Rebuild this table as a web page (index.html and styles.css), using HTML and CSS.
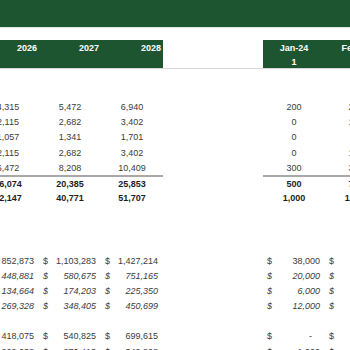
FILE: index.html
```html
<!DOCTYPE html>
<html>
<head>
<meta charset="utf-8">
<link rel="stylesheet" href="styles.css">
</head>
<body>
<div class="band"></div>
<div class="sheet">
  <div class="row hdr">
    <div class="hcell">2026</div>
    <div class="hcell">2027</div>
    <div class="hcell">2028</div>
    <div class="gap"></div>
    <div class="hcell mcell"><span>Jan-24</span><span>1</span></div>
    <div class="hcell mcell"><span>Feb-24</span><span>2</span></div>
  </div>

  <div class="row"></div>
  <div class="row"></div>

  <div class="row"><div class="c">4,315</div><div class="c">5,472</div><div class="c">6,940</div><div class="gap"></div><div class="c">200</div><div class="c">240</div></div>
  <div class="row"><div class="c">2,115</div><div class="c">2,682</div><div class="c">3,402</div><div class="gap"></div><div class="c">0</div><div class="c">100</div></div>
  <div class="row"><div class="c">1,057</div><div class="c">1,341</div><div class="c">1,701</div><div class="gap"></div><div class="c">0</div><div class="c">0</div></div>
  <div class="row"><div class="c">2,115</div><div class="c">2,682</div><div class="c">3,402</div><div class="gap"></div><div class="c">0</div><div class="c">100</div></div>
  <div class="row"><div class="c">6,472</div><div class="c">8,208</div><div class="c">10,409</div><div class="gap"></div><div class="c">300</div><div class="c">300</div></div>
  <div class="row bold"><div class="c tot">16,074</div><div class="c tot">20,385</div><div class="c tot">25,853</div><div class="gap"></div><div class="c tot">500</div><div class="c tot">740</div></div>
  <div class="row bold"><div class="c">32,147</div><div class="c">40,771</div><div class="c">51,707</div><div class="gap"></div><div class="c">1,000</div><div class="c">1,480</div></div>

  <div class="row"></div>
  <div class="row"></div>
  <div class="row tall"></div>

  <div class="row">
    <div class="acct"><span>$</span><span>852,873</span></div>
    <div class="acct"><span>$</span><span>1,103,283</span></div>
    <div class="acct"><span>$</span><span>1,427,214</span></div>
    <div class="gap"></div>
    <div class="acct"><span>$</span><span>38,000</span></div>
    <div class="acct"><span>$</span><span>45,600</span></div>
  </div>
  <div class="row it">
    <div class="acct"><span>$</span><span>448,881</span></div>
    <div class="acct"><span>$</span><span>580,675</span></div>
    <div class="acct"><span>$</span><span>751,165</span></div>
    <div class="gap"></div>
    <div class="acct"><span>$</span><span>20,000</span></div>
    <div class="acct"><span>$</span><span>24,000</span></div>
  </div>
  <div class="row it">
    <div class="acct"><span>$</span><span>134,664</span></div>
    <div class="acct"><span>$</span><span>174,203</span></div>
    <div class="acct"><span>$</span><span>225,350</span></div>
    <div class="gap"></div>
    <div class="acct"><span>$</span><span>6,000</span></div>
    <div class="acct"><span>$</span><span>7,200</span></div>
  </div>
  <div class="row it">
    <div class="acct"><span>$</span><span>269,328</span></div>
    <div class="acct"><span>$</span><span>348,405</span></div>
    <div class="acct"><span>$</span><span>450,699</span></div>
    <div class="gap"></div>
    <div class="acct"><span>$</span><span>12,000</span></div>
    <div class="acct"><span>$</span><span>14,400</span></div>
  </div>

  <div class="row"></div>

  <div class="row">
    <div class="acct"><span>$</span><span>418,075</span></div>
    <div class="acct"><span>$</span><span>540,825</span></div>
    <div class="acct"><span>$</span><span>699,615</span></div>
    <div class="gap"></div>
    <div class="acct"><span>$</span><span class="dash">-</span></div>
    <div class="acct"><span>$</span><span>8,400</span></div>
  </div>
  <div class="row">
    <div class="acct"><span>$</span><span>209,038</span></div>
    <div class="acct"><span>$</span><span>270,413</span></div>
    <div class="acct"><span>$</span><span>349,808</span></div>
    <div class="gap"></div>
    <div class="acct"><span>$</span><span>1,200</span></div>
    <div class="acct"><span>$</span><span>2,400</span></div>
  </div>
</div>
</body>
</html>
```
FILE: styles.css
```css
html, body {
  margin: 0;
  padding: 0;
  background: #ffffff;
  overflow: hidden;
  width: 350px;
  height: 350px;
}

body {
  font-family: "Liberation Sans", Arial, sans-serif;
  font-size: 9px;
  color: #3b3b3b;
}

.band {
  height: 27px;
  background: #1d5530;
  border-bottom: 1px solid #e4e8e4;
  margin-bottom: 12px;
}

.sheet {
  margin-left: -23px;
  width: 410px;
}

.row {
  display: grid;
  grid-template-columns: 62px 62px 62px 100px 62px 62px;
  height: 15.2px;
}

.row.tall {
  height: 16.9px;
}

.row > div {
  display: flex;
  align-items: center;
  white-space: nowrap;
  box-sizing: border-box;
}

.hdr {
  height: 29px;
  border-bottom: 1px solid #d6d6d6;
  box-sizing: border-box;
}

.hdr > .hcell {
  background: #1d5530;
  color: #ffffff;
  font-weight: bold;
  align-items: flex-start;
  justify-content: flex-end;
  padding: 3px 2px 0 0;
}

.hdr > .mcell {
  flex-direction: column;
  align-items: center;
  justify-content: flex-start;
  padding: 3px 0 0 0;
  gap: 4px;
}

.c {
  justify-content: center;
}

.bold > div {
  font-weight: bold;
  color: #1c1c1c;
}

.tot {
  border-top: 2px solid #a8a8a8;
  padding-top: 1px;
}

.it > div {
  font-style: italic;
}

.acct {
  justify-content: space-between;
  padding: 0 5px 0 4px;
}

.dash {
  padding-right: 8px;
}
```
